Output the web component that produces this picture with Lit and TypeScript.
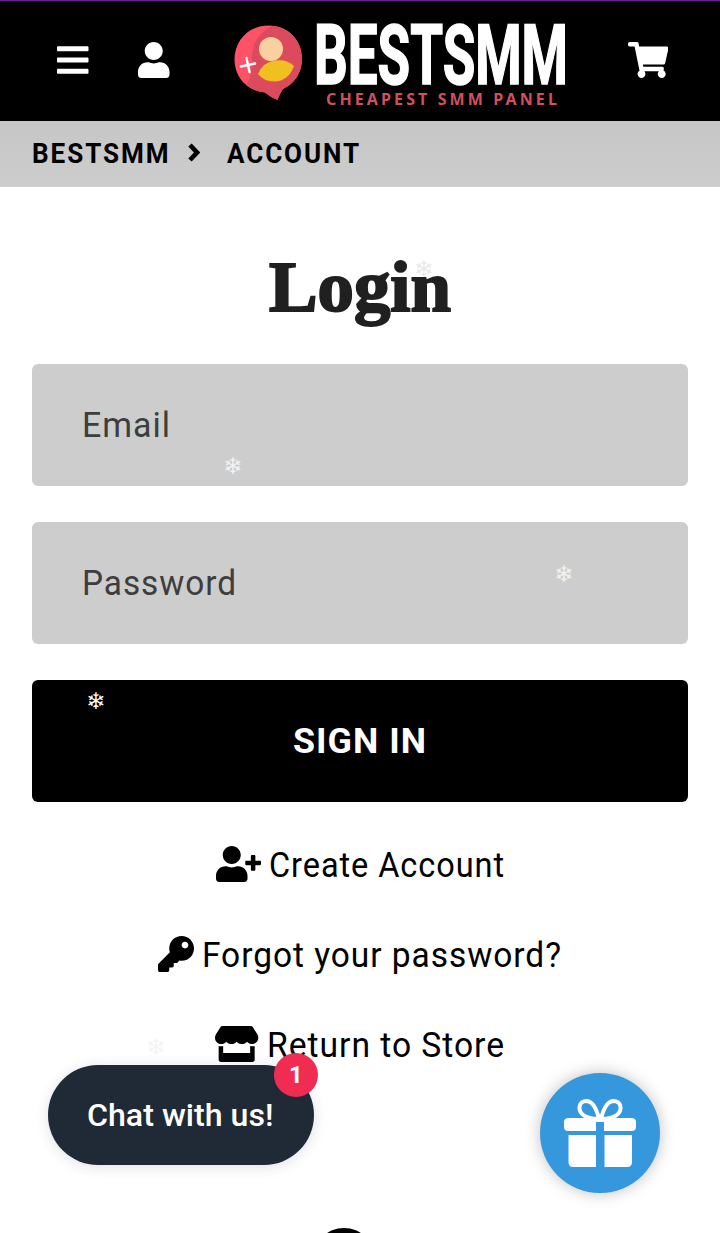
import { LitElement, html, svg, css } from "lit";
import { customElement } from "lit/decorators.js";

const USER = "M224 256c70.7 0 128-57.3 128-128S294.7 0 224 0 96 57.3 96 128s57.3 128 128 128zm89.6 32h-16.7c-22.2 10.2-46.9 16-72.9 16s-50.6-5.8-72.9-16h-16.7C60.2 288 0 348.2 0 422.4V464c0 26.5 21.5 48 48 48h352c26.5 0 48-21.5 48-48v-41.6c0-74.2-60.2-134.4-134.4-134.4z";
const BARS = "M16 132h416c8.8 0 16-7.2 16-16V76c0-8.8-7.2-16-16-16H16C7.2 60 0 67.2 0 76v40c0 8.8 7.2 16 16 16zm0 160h416c8.8 0 16-7.2 16-16v-40c0-8.8-7.2-16-16-16H16c-8.8 0-16 7.2-16 16v40c0 8.8 7.2 16 16 16zm0 160h416c8.8 0 16-7.2 16-16v-40c0-8.8-7.2-16-16-16H16c-8.8 0-16 7.2-16 16v40c0 8.8 7.2 16 16 16z";
const CART = "M528.12 301.319l47.273-208C578.806 78.301 567.391 64 551.99 64H159.208l-9.166-44.81C147.758 8.021 137.93 0 126.529 0H24C10.745 0 0 10.745 0 24v16c0 13.255 10.745 24 24 24h69.883l70.248 343.435C147.325 417.1 136 435.222 136 456c0 30.928 25.072 56 56 56s56-25.072 56-56c0-15.674-6.447-29.835-16.824-40h209.647C430.447 426.165 424 440.326 424 456c0 30.928 25.072 56 56 56s56-25.072 56-56c0-22.172-12.888-41.332-31.579-50.405l5.517-24.276c3.413-15.018-8.002-29.319-23.403-29.319H218.117l-6.545-32h293.145c11.206 0 20.92-7.754 23.403-18.681z";
const PLUS = "M624 208h-64v-64c0-8.8-7.2-16-16-16h-32c-8.8 0-16 7.2-16 16v64h-64c-8.8 0-16 7.2-16 16v32c0 8.8 7.2 16 16 16h64v64c0 8.8 7.2 16 16 16h32c8.8 0 16-7.2 16-16v-64h64c8.8 0 16-7.2 16-16v-32c0-8.8-7.2-16-16-16z";
const KEY = "M512 176.001C512 273.203 433.202 352 336 352c-11.22 0-22.19-1.062-32.827-3.069l-24.012 27.014A23.999 23.999 0 0 1 261.223 384H224v40c0 13.255-10.745 24-24 24h-40v40c0 13.255-10.745 24-24 24H24c-13.255 0-24-10.745-24-24v-78.059c0-6.365 2.529-12.47 7.029-16.971l161.802-161.802C163.108 213.814 160 195.271 160 176 160 78.798 238.797.001 335.999 0 433.488-.001 512 78.511 512 176.001zM336 128c0 26.51 21.49 48 48 48s48-21.49 48-48-21.49-48-48-48-48 21.49-48 48z";
const STORE = "M602 118.6L537.1 15C531.3 5.7 521 0 510 0H106C95 0 84.7 5.7 78.9 15L14 118.6c-33.5 53.5-3.8 127.9 58.8 136.4 4.5.6 9.1.9 13.7.9 29.6 0 55.8-13 73.8-33.1 18 20.1 44.3 33.1 73.8 33.1 29.6 0 55.8-13 73.8-33.1 18 20.1 44.3 33.1 73.8 33.1 29.6 0 55.8-13 73.8-33.1 18.1 20.1 44.3 33.1 73.8 33.1 4.7 0 9.2-.3 13.7-.9 62.8-8.4 92.6-82.8 59-136.4zM529.5 288c-10 0-19.9-1.5-29.5-3.8V384H116v-99.8c-9.6 2.2-19.5 3.8-29.5 3.8-6 0-12.1-.4-18-1.2-5.6-.8-11.1-2.1-16.4-3.6V480c0 17.7 14.3 32 32 32h448c17.7 0 32-14.3 32-32V283.2c-5.4 1.6-10.8 2.9-16.4 3.6-6.1.8-12.1 1.2-18.2 1.2z";

const icon = (w: number, d: string, extra = "") => html`
  <svg width=${(w * 36) / 512} height="36" viewBox="0 0 ${w} 512" fill="currentColor" aria-hidden="true">
    <path d=${d}></path>${extra ? svg`<path d=${extra}></path>` : ""}
  </svg>`;

/* A line of text fitted to an exact width; the baseline sits at `base` in a box of height `h`. */
const line = (text: string, w: number, h: number, base: number, cls: string) => html`
  <svg class="line ${cls}" width=${w} height=${h} viewBox="0 0 ${w} ${h}">
    <text x="0" y=${base} textLength=${w} lengthAdjust="spacingAndGlyphs">${text}</text>
  </svg>`;

const FLAKES = [
  { x: 424, y: 269, c: "#e9e9e9" },
  { x: 233, y: 466, c: "#f2f2f2" },
  { x: 564, y: 574, c: "#f2f2f2" },
  { x: 96, y: 701, c: "#ffffff" },
  { x: 156, y: 1047, c: "#f4f4f4" },
];

@customElement("app-root")
export class AppRoot extends LitElement {
  static styles = css`
    :host { display: block; position: relative; width: 720px; height: 1233px; overflow: hidden; background: #fff; color: #000; font-family: Roboto, "Liberation Sans", sans-serif; }
    * { box-sizing: border-box; }
    svg { display: block; flex: none; }
    .line { overflow: visible; fill: currentColor; }
    header { height: 121px; border-top: 1px solid #6a1b9a; background: #000; color: #fff; display: flex; align-items: flex-start; padding: 0 52px 0 57px; }
    header > svg { margin-top: 41px; }
    .user { margin-left: 49.5px; margin-top: 41px; }
    .logo { margin: 21px 0 0 64px; display: flex; }
    .mark { margin-top: 2px; }
    .words { margin-left: 11px; display: flex; flex-direction: column; }
    .brand { font-size: 83px; font-weight: 700; stroke: #fff; stroke-width: 1.6px; }
    .tag { font-size: 15.5px; font-weight: 700; letter-spacing: 3px; color: #d0505f; font-family: "Noto Sans", sans-serif; margin-left: 12px; }
    .cart { margin-left: auto; margin-top: 41px; }
    nav { height: 66px; background: linear-gradient(#c6c6c6, #cdcdcd); display: flex; align-items: flex-start; padding: 18px 0 0 31.5px; }
    .crumb { font-size: 27px; font-weight: 700; letter-spacing: 2px; }
    .chev { margin: 4px 0 0 17.5px; }
    .second { margin-left: 27px; }
    main { padding: 60px 32px 0; display: flex; flex-direction: column; }
    .title { align-self: center; font-size: 71px; font-weight: 700; color: #202020; font-family: "Liberation Serif", serif; stroke: #202020; stroke-width: 2px; }
    .field { height: 122px; border-radius: 6px; background: #cdcdcd; color: #3d3d3d; margin-bottom: 36px; padding: 36px 0 0 50px; }
    .din { font-size: 35px; font-weight: 400; letter-spacing: 1px; }
    .signin { height: 122px; border: 0; border-radius: 6px; background: #000; color: #fff; display: flex; justify-content: center; align-items: flex-start; padding: 36px 0 0; font-family: inherit; }
    .bold { font-size: 35px; font-weight: 700; letter-spacing: 1px; }
    .links { display: flex; flex-direction: column; align-items: center; gap: 54px; margin-top: 43.5px; }
    .link { display: flex; gap: 8px; height: 36px; }
    .flake { position: absolute; width: 24px; height: 24px; line-height: 24px; text-align: center; font-family: "DejaVu Sans", sans-serif; font-size: 23px; transform: translate(-50%, -50%); }
    .chat { position: absolute; left: 48px; top: 1065px; width: 266px; height: 100px; border-radius: 50px; background: #202a36; color: #fff; box-shadow: 0 2px 14px rgba(30, 40, 80, .14); padding: 30px 0 0 39px; font-size: 32px; font-weight: 500; }
    .badge { position: absolute; right: -4px; top: -12px; width: 44px; height: 44px; line-height: 44px; border-radius: 50%; background: #f12c53; font-size: 24px; font-weight: 700; text-align: center; }
    .gift { position: absolute; left: 540px; top: 1073px; width: 120px; height: 120px; border-radius: 50%; background: #3598dc; box-shadow: 0 0 16px rgba(0, 0, 0, .25); display: flex; justify-content: center; padding-top: 26px; }
    .next { position: absolute; left: 313px; top: 1228px; width: 62px; height: 62px; border-radius: 50%; background: #000; }
  `;

  render() {
    return html`
      <header>
        ${icon(448, BARS)}
        <div class="user">${icon(448, USER)}</div>
        <div class="logo">
          <svg class="mark" width="69" height="77" viewBox="0 0 69 77">
            <defs><clipPath id="b"><path d="M34.500 1.500C54 1.500 68 16 68 35C68 49 60 60 49 65Q46 69 43.500 76Q36 73 31 68.500C13 67 .5 53 .5 35.500C.5 16 15 1.500 34.500 1.500z"/></clipPath></defs>
            <g clip-path="url(#b)">
              <rect width="69" height="77" fill="#ff5267"/>
              <path d="M42 0Q17 11 18 35Q19 56 8 66L30 77H69V0z" fill="#dc4b5d"/>
            </g>
            <circle cx="37" cy="25" r="12" fill="#fbd0a0"/>
            <path d="M24 50Q29 38 41 36.500Q53 35 60 42Q55 56 42 57.500Q30 58 24 50z" fill="#f0c020"/>
            <path d="M12.500 34l3 14M7 42.500l14-3" stroke="#fff" stroke-width="2.400" stroke-linecap="round"/>
          </svg>
          <div class="words">
            ${line("BESTSMM", 254, 68, 61.5, "brand")}
            ${line("CHEAPEST SMM PANEL", 234, 17, 15, "tag")}
          </div>
        </div>
        <div class="cart">${icon(576, CART)}</div>
      </header>
      <nav>
        ${line("BESTSMM", 138.5, 30, 24, "crumb")}
        <svg class="chev" width="12" height="20" viewBox="0 0 12 20" fill="none" stroke="#000" stroke-width="4.600"><path d="M2 2L9 9.500L2 17"/></svg>
        <div class="second">${line("ACCOUNT", 134, 30, 24, "crumb")}</div>
      </nav>
      <main>
        ${line("Login", 182, 117, 64, "title")}
        <div class="field">${line("Email", 89, 50, 37, "din")}</div>
        <div class="field">${line("Password", 155, 50, 37, "din")}</div>
        <button class="signin">${line("SIGN IN", 134, 50, 37, "bold")}</button>
        <div class="links">
          <div class="link">${icon(640, USER, PLUS)}${line("Create Account", 236, 36, 31, "din")}</div>
          <div class="link">${icon(512, KEY)}${line("Forgot your password?", 360, 36, 31, "din")}</div>
          <div class="link">${icon(616, STORE)}${line("Return to Store", 238, 36, 31, "din")}</div>
        </div>
      </main>
      ${FLAKES.map((f) => html`<span class="flake" style="left:${f.x}px;top:${f.y}px;color:${f.c}">❄</span>`)}
      <div class="next"></div>
      <div class="chat">${line("Chat with us!", 186.5, 44, 31, "")}<span class="badge">1</span></div>
      <div class="gift">
        <svg width="72" height="68" viewBox="0 0 72 68" fill="#fff">
          <path d="M5 19H32V32H4Q0 32 0 28V23Q0 19 5 19zM40 19H67Q72 19 72 23V28Q72 32 68 32H40zM4.500 36H32V68H9Q4.500 68 4.500 63zM40.500 36H68V63Q68 68 63 68H40.500zM31 19h10v4H31z"/>
          <path d="M35 20Q31 3 23 2Q15 2 15.500 10Q17 19 34 20M37 20Q41 3 49 2Q57 2 56.500 10Q55 19 38 20" fill="none" stroke="#fff" stroke-width="4"/>
        </svg>
      </div>
    `;
  }
}
